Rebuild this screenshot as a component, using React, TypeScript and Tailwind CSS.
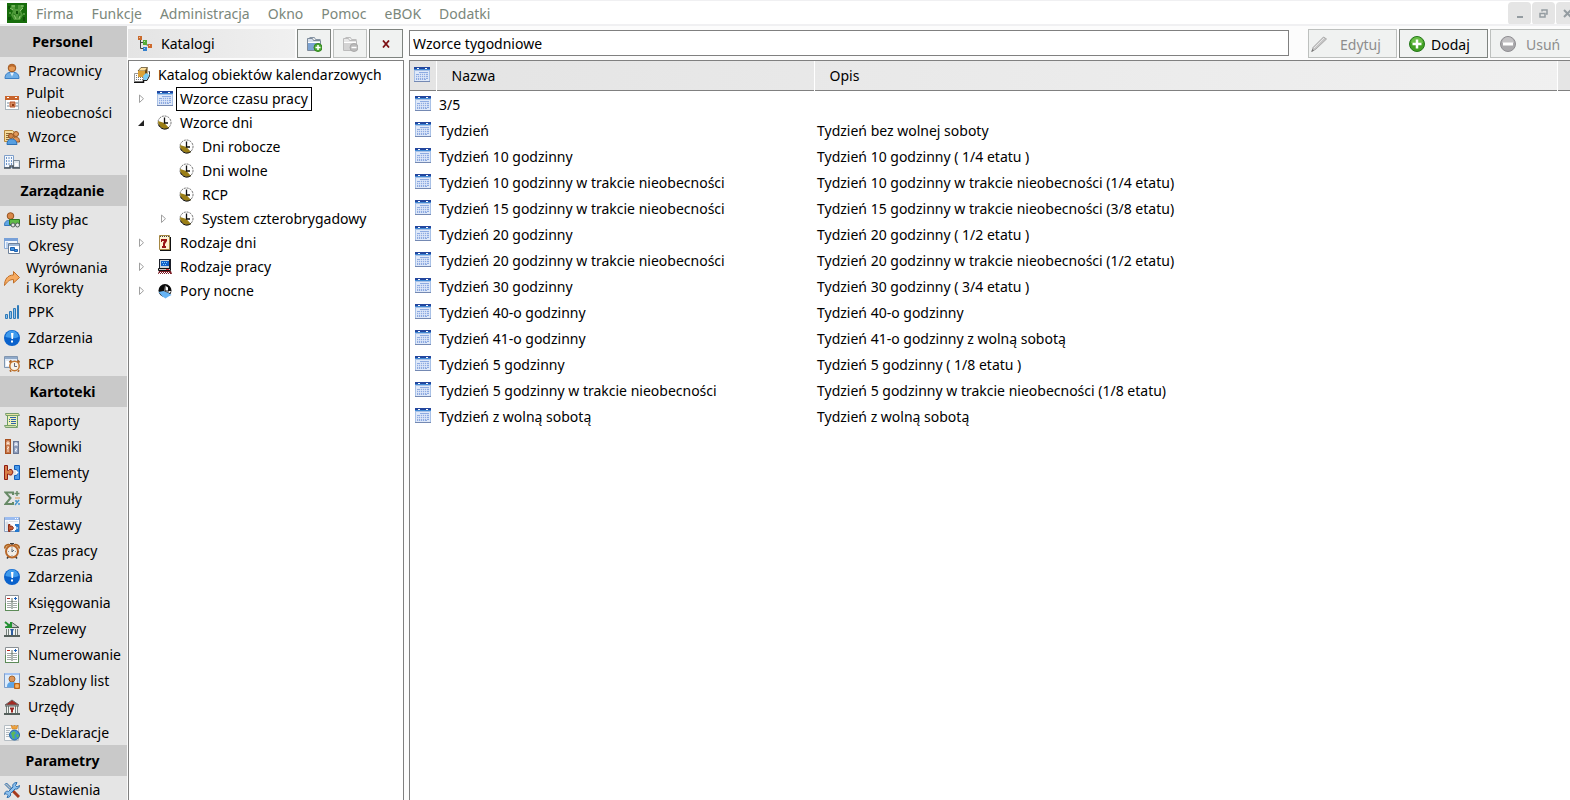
import { useState } from "react";
import type { ReactNode } from "react";

const NAV_ROW = "flex shrink-0 items-center pl-1 text-[14px] leading-[20px] hover:bg-[#d8e6f2]";
const TOOL_BUTTON = "flex h-[29px] shrink-0 items-center border bg-[#f0f2f1]";
const WINDOW_BUTTON =
  "flex h-[23px] w-[23px] items-center justify-center rounded-sm bg-[#e5e5e5] text-[#949ca1]";

type IconName = keyof typeof ICONS;

// All drawings share a 16x16 grid.
const ICONS = {
  user: (
    <>
      <path d="M1 15.500c0-4 2-6 5-6h4c3 0 5 2 5 6z" fill="#6faee6" stroke="#3c7fc4" />
      <path d="M6 9.500l2 4 2-4z" fill="#e8f3ff" />
      <circle cx="8" cy="5" r="3.800" fill="#e59a55" stroke="#9a5420" />
      <path d="M4.500 5c0-5 7-5 7 0-2-2-5-2-7 0z" fill="#b9692c" />
    </>
  ),
  absence: (
    <>
      <rect x="1.500" y="1.500" width="13" height="13" fill="#fff" stroke="#a8b4bc" />
      <path d="M1 1h14v4H1z" fill="#c8642c" />
      <path d="M3 2h2v1H3zM11 2h2v1h-2z" fill="#fff" />
      <path d="M3 7h2v2H3zM3 10h2v2H3zM12 7h2v2h-2zM12 10h2v2h-2z" fill="#b9c4cb" />
      <path d="M6 7h5v5H6z" fill="#d98d62" stroke="#b4552a" />
      <path d="M8 9h2v2H8z" fill="#8f3b12" />
    </>
  ),
  patterns: (
    <>
      <path d="M.500 1.500h8l2 2v9H.500z" fill="#f6dc9c" stroke="#b8893c" />
      <path d="M2 4.500h6M2 6.500h4M2 8.500h3M2 10.500h3" stroke="#8d6a35" />
      <circle cx="7" cy="7" r="2.500" fill="#d18545" stroke="#96531f" />
      <circle cx="12" cy="5" r="2.500" fill="#e49b5c" stroke="#96531f" />
      <path d="M9 13c0-4 1-5 3-5s3.500 1 3.500 5z" fill="#e0955a" stroke="#96531f" />
      <path d="M3 15.500c0-4 2-5.500 4.500-5.500s5 1 5.500 5.500z" fill="#579fe0" stroke="#2f70b4" />
    </>
  ),
  company: (
    <>
      <path d="M.500.500h9v12h-9z" fill="#f4f8fd" stroke="#7f9fc9" />
      <path
        d="M2 2h1v2H2zM4.500 2h1v2h-1zM7 2h1v2H7zM2 5h1v2H2zM4.500 5h1v2h-1zM7 5h1v2H7zM2 8h1v2H2zM4.500 8h1v2h-1zM7 8h1v2H7z"
        fill="#6f95c8"
      />
      <path d="M9.500 5.500h6v7h-6z" fill="#dfe7ef" stroke="#7b8995" />
      <path d="M11 8h3v3h-3z" fill="#fff" />
      <path d="M0 13h6v-2h3v2h7" fill="none" stroke="#49545e" strokeWidth="1.500" />
    </>
  ),
  payroll: (
    <>
      <circle cx="6.500" cy="4" r="3.300" fill="#d9894a" stroke="#96531f" />
      <path d="M.500 13.500c0-4 2-5 4-5h3c2 0 3 1 4 3v2z" fill="#5fa6e4" stroke="#3877ba" />
      <path d="M5.500 7.500h10v5h-10z" fill="#5fbb46" stroke="#2c7a23" />
      <circle cx="9" cy="13" r="2" fill="#e6e6e6" stroke="#55605c" />
      <circle cx="13.500" cy="13" r="2" fill="#e6e6e6" stroke="#55605c" />
    </>
  ),
  periods: (
    <>
      <path d="M.500.500h13v10H.500z" fill="#f2f7fd" stroke="#8aabd6" />
      <path d="M0 0h14v3H0z" fill="#77a0d8" />
      <path d="M2 4h2v6H2z" fill="#b9d0ee" />
      <path d="M4.500 5.500h11v10h-11z" fill="#fff" stroke="#6d8099" />
      <path d="M5 6h10v2H5z" fill="#9db8d8" />
      <path d="M6.500 9.500h4v3h-4zM10.500 11.500h3v2h-3z" fill="#3e92e4" stroke="#1f62b0" />
    </>
  ),
  adjust: (
    <path
      d="M.500 15.500c0-6 3-10.500 9-10.500V1.500l6 6-6 5.500V9.500c-4 0-6 2-9 6z"
      fill="#f6ab62"
      stroke="#c06f28"
    />
  ),
  bars: (
    <g fill="#8cc2ee" stroke="#2f7ab8">
      <path d="M1.500 10.500h2v4h-2zM5.500 7.500h2v7h-2zM9.500 4.500h2v10h-2zM13.500 1.500h1v13h-1z" />
    </g>
  ),
  event: (
    <>
      <circle cx="8" cy="8" r="8" fill="#0a62cc" />
      <path d="M1.500 7a6.500 6.500 0 0 1 13 0c-4 2-8 1-13 0z" fill="#3f9aec" />
      <path d="M7 3h2.500L9 9H7.500z" fill="#fff" />
      <path d="M7 10.500h2v2H7z" fill="#fff" />
    </>
  ),
  rcp: (
    <>
      <path d="M.500.500h13v11H.500z" fill="#dfe9f5" stroke="#8096b0" />
      <path d="M1 1h12v2H1z" fill="#8fa9c9" />
      <path d="M2 5h3v5H2z" fill="#fff" />
      <path d="M5.500 6.500l2-2M15.500 6.500l-2-2M6 15.500l1-1M15 15.500l-1-1" stroke="#a85f20" strokeWidth="2" />
      <circle cx="10.500" cy="10" r="4.700" fill="#f7f3ea" stroke="#c3762f" strokeWidth="1.500" />
      <path d="M10.500 7v3.500H13" fill="none" stroke="#667" />
    </>
  ),
  report: (
    <>
      <path d="M3.500 1.500h10v12h-10z" fill="#eef2bb" stroke="#6a9c5f" />
      <path d="M1.500.500h13l1 2H2z" fill="#e7e3a4" stroke="#779f6c" />
      <path d="M.500 12.500h11l2 2H1.500z" fill="#cbdcaa" stroke="#779f6c" />
      <path d="M6 4.500h6M7 6.500h5M7 8.500h5M7 10.500h5" stroke="#2f62a8" />
      <path d="M5 6.500h1M5 8.500h1" stroke="#2f62a8" />
    </>
  ),
  dictionary: (
    <>
      <path d="M1 0h6v15H1z" fill="#a9501f" />
      <path d="M2 1h4v13H2z" fill="#c4754a" />
      <path d="M3 6V3h2v3M3 4.500h2M3 8h2L3 10h2M3 12h2" fill="none" stroke="#ffe5cf" />
      <path d="M9 2h6v13H9z" fill="#6a7794" />
      <path d="M10 3h4v11h-4z" fill="#8b9ab8" />
      <path d="M11 7V4h2v3M11 5.500h2M11 10h2l-2 2h2" fill="none" stroke="#eef3ff" />
    </>
  ),
  elements: (
    <>
      <path d="M.500.500h3v5h1l1-1h2l1.500 2.500L7.500 10h-2l-1-1h-1v5.500h-3z" fill="#d97f48" stroke="#8f1c14" />
      <path d="M10.500.500h5v14h-5v-4h2l1-3-1-3h-2z" fill="#4b9aea" stroke="#0f5bb8" />
      <path d="M12 5l2.500 2.500L12 10z" fill="#fff" />
    </>
  ),
  formula: (
    <>
      <path d="M9 4V1.500H1.500l5 5.500-5 6H9V11" fill="none" stroke="#678a66" strokeWidth="2" />
      <path d="M13 0v5M10.500 2.500h5" stroke="#678a66" strokeWidth="1.500" />
      <path d="M11 14l4-5M11 10h2M14 13h2" stroke="#4a97cf" strokeWidth="1.500" />
      <path d="M11 7h5" stroke="#df9b59" />
    </>
  ),
  sets: (
    <>
      <path d="M.500.500h15v14H.500z" fill="#f7f9fc" stroke="#8a9ebc" />
      <path d="M1 0h14v3H1z" fill="#9bbcf0" />
      <path d="M11 1h1v1h-1zM13 1h1v1h-1z" fill="#fff" />
      <path d="M2 5h2v8H2zM5 4.500h9" fill="#dadfe6" stroke="#dadfe6" />
      <path d="M4.500 7.500h1.500v2l2-.500 1.500 2-1.500 2-2-.500v2H4.500z" fill="#c55c34" stroke="#8f2f1a" />
      <path d="M11 7h4v8h-4v-2h1V9h-1z" fill="#2479cf" />
      <path d="M12.500 9.500l1.500 1.500-1.500 1.500z" fill="#fff" />
    </>
  ),
  clock: (
    <>
      <path d="M1 5.500c-1-3 3-5 5-3.500M15 5.500c1-3-3-5-5-3.500" fill="#e9b46c" stroke="#a85f20" strokeWidth="1.500" />
      <path d="M6 .500h4M8 0v2M3 15.500l1.500-2M13 15.500l-1.500-2" stroke="#3c3c3c" strokeWidth="1.500" />
      <circle cx="8" cy="8.500" r="6" fill="#f3eee6" stroke="#b9692c" strokeWidth="2" />
      <path d="M8 5.500v3.500M8 9l2-2" stroke="#5a6672" />
      <path d="M8 4v1M8 13v-1M4 8.500h1M12 8.500h-1" stroke="#8c98a4" />
    </>
  ),
  ledger: (
    <>
      <path d="M1.500.500h13v15h-13z" fill="#fff" stroke="#8a9094" />
      <path d="M1 15.500h14M1.500 8v8M14.500 8v8" stroke="#5d8b58" />
      <path d="M3 3.500h3" stroke="#b7211a" />
      <path d="M11.500 2v3M10 3.500h3" stroke="#1d62ba" />
      <path d="M3 6.500h10M3 8.500h4M9 8.500h4M3 10.500h4M9 10.500h4M3 12.500h4M9 12.500h4" stroke="#a3aaa7" />
      <path d="M8 3v11" stroke="#5d6c60" />
    </>
  ),
  transfer: (
    <>
      <path d="M0 14h16v2H0z" fill="#55605c" />
      <path d="M2 8h12v6H2z" fill="#eef1ef" />
      <path d="M2.500 8v6M4.500 8v6M11.500 8v6M13.500 8v6" stroke="#747f7a" />
      <path d="M1 6.500l7-5 7 5z" fill="#c5cbc8" stroke="#505b56" />
      <path d="M6 8h4l-1 2v4H7v-4z" fill="#2f5d9e" />
      <path d="M1 1l5 4M7 1v5H1.500" fill="none" stroke="#229332" strokeWidth="2" />
    </>
  ),
  template: (
    <>
      <path d="M.500.500h15v14H.500z" fill="#dcebfb" stroke="#7d9dc8" />
      <path d="M1 0h14v2H1z" fill="#a2c3f3" />
      <circle cx="8" cy="6" r="3" fill="#dc965b" stroke="#a5662f" />
      <path d="M3 14c0-4 2-5 5-5s5 1 5 5z" fill="#5ca4e6" />
      <path d="M10.500 10.500h5v5h-5z" fill="#e38c32" stroke="#b9651a" />
      <path d="M11 13h4M13 11v4" stroke="#f9c180" />
    </>
  ),
  office: (
    <>
      <path d="M0 14h16v2H0z" fill="#55605c" />
      <path d="M2 7h12v7H2z" fill="#f1f3f2" />
      <path d="M2.500 7v7M4.500 7v7M11.500 7v7M13.500 7v7" stroke="#727d78" />
      <path d="M1 6l7-5 7 5z" fill="#a22a22" stroke="#6b6b6b" />
      <path d="M1 7h14" stroke="#5b6661" />
      <path d="M6 8.500h4v2H9v3H7v-3H6z" fill="#9b2620" />
    </>
  ),
  declaration: (
    <>
      <path d="M.500.500h14v15H.500z" fill="#fafafa" stroke="#b6bec4" />
      <path d="M2 3.500h5M2 5.500h4M2 7.500h3M2 9.500h3M2 11.500h3" stroke="#b2bac0" />
      <circle cx="10.500" cy="10" r="5" fill="#3d8fd4" stroke="#2767a2" />
      <path d="M7 8l3-2 2 2-2 2 1 3-2 1-1-3zM13 9l2 1-1 3-2-2z" fill="#5cb85a" />
      <path d="M7 0l2 1.500L10.500 0 12 1.500 14 0l-1 4H8z" fill="#f0a23a" stroke="#c47416" strokeWidth=".5" />
    </>
  ),
  settings: (
    <>
      <path d="M1 2.500l1.500-1.500 5 5L6 7.500z" fill="#b6bec4" stroke="#2e6fae" />
      <path d="M9 9l2 2 4 4" fill="none" stroke="#a53a1e" strokeWidth="3" />
      <path
        d="M15.500 3.500l-2.500 1.500-1.500-1.500L13 .500c-3 0-5 2-4 4.500L4.500 9.500c-2-1-4 .500-4 3L2 11.500l2 2L3 15.500c3 0 4-2 3.500-4L11 7c2.500.500 4.500-1 4.500-3.500z"
        fill="#8cc0ee"
        stroke="#2e6fae"
      />
    </>
  ),
  tree: (
    <>
      <path d="M3.500 3v9.500H6M3.500 6.500H6M9 8.500l3 1" fill="none" stroke="#3c443f" />
      <path d="M1 0h4v4H1z" fill="#c96a2c" />
      <path d="M6 4h4v5H6z" fill="#54ad37" />
      <path d="M11 8h4v4h-4z" fill="#ce6a2c" />
      <path d="M6 11h4v4H6z" fill="#3380cd" />
      <path d="M2 1h1v1H2zM7 5h1v1H7zM7 12h1v1H7zM12 9h1v1h-1z" fill="#fff" opacity=".6" />
    </>
  ),
  folderAdd: (
    <>
      <path d="M1.500 14.500v-12h5l1 2h7v10z" fill="#d7e0eb" stroke="#7d8b9b" />
      <path d="M3.500 1.500h5l1 2h5" fill="none" stroke="#8795a4" />
      <path d="M2 7h12v7H2z" fill="#7ca4d3" />
      <path d="M2 6.500h12" stroke="#fff" />
      <circle cx="12" cy="11.500" r="4" fill="#4bab32" stroke="#32841f" />
      <path d="M12 9v5M9.500 11.500h5" stroke="#fff" strokeWidth="1.500" />
    </>
  ),
  folderRemove: (
    <>
      <path d="M1.500 14.500v-12h5l1 2h7v10z" fill="#e8e8e8" stroke="#bcbcbc" />
      <path d="M3.500 1.500h5l1 2h5" fill="none" stroke="#bdbdbd" />
      <path d="M2 7h12v7H2z" fill="#d4d4d4" />
      <path d="M2 6.500h12" stroke="#fff" />
      <circle cx="12" cy="11.500" r="4" fill="#bbb" stroke="#a9a9a9" />
      <path d="M9.500 11.500h5" stroke="#fff" strokeWidth="1.500" />
    </>
  ),
  catalog: (
    <>
      <path d="M.500 6.500h9v8h-9z" fill="#fff" stroke="#999" />
      <path d="M2 8.500h7M2 10.500h7M2 12.500h7" stroke="#777" strokeDasharray="1 1" />
      <path d="M0 15.500h9.500V13" fill="none" stroke="#111" strokeWidth="1.500" />
      <path d="M4 4l3-3.500h6.500L11 4z" fill="#ffe09a" stroke="#4d3d1c" strokeWidth=".7" />
      <path d="M4 4h7v6H4z" fill="#dca136" />
      <path d="M11 4l2.500-3.500V7L11 10z" fill="#6d4a10" />
      <path d="M9 9l3-3 3.500 2-3 5H10z" fill="#79cdf6" />
      <path d="M10 13.500h3l3-5.500-1-4" fill="none" stroke="#1c1c1c" />
    </>
  ),
  calendar: (
    <>
      <path d="M0 1h16v13H0z" fill="#a9c1e6" />
      <path d="M1 4h14v10H1z" fill="#dfe9f9" />
      <path d="M0 0h16v2H0z" fill="#23479e" />
      <path d="M0 2h16v1H0z" fill="#3f88d4" />
      <path d="M3 1h2v1H3zM11 1h2v1h-2z" fill="#fff" />
      <path d="M0 14h16v1H0z" fill="#7489b3" />
      <path d="M5 5h9v7h-2v1H2V7h3z" fill="#8eabe2" />
      <path
        d="M5 6.500h9M2 8.500h12M2 10.500h12M3.500 8v5M5.500 6v7M7.500 6v7M9.500 6v7M11.500 6v6"
        stroke="#dfe9f9"
        strokeWidth=".8"
      />
    </>
  ),
  dayPattern: (
    <>
      <circle cx="7.500" cy="7.500" r="6.500" fill="#fff" stroke="#666" strokeDasharray="2 1" />
      <path d="M1 6l6.500 2 4.500 5C8 15.500 1 13 1 6z" fill="#9a7e16" />
      <path d="M1.500 9.500c2 4.500 7 6 10.500 3" fill="none" stroke="#111" />
      <path d="M7.500 2.500v5.500H11" fill="none" stroke="#111" strokeWidth="1.300" />
    </>
  ),
  dayKind: (
    <>
      <path d="M3 2h11v14H3z" fill="#111" />
      <path d="M2.500.500h10v14h-10z" fill="#fff4d4" stroke="#a58744" />
      <path d="M3 1.500h9" stroke="#444" strokeDasharray="1 1" />
      <path d="M4 4h6v2L8 9v2h1v2H5v-2h1V8l1-2H5v1H4z" fill="#981616" />
    </>
  ),
  workKind: (
    <>
      <path d="M2 0h12v10H2z" fill="#1d2029" />
      <path d="M3 1h9v8H3z" fill="#ccd5d9" />
      <path d="M4 2h8v5H4z" fill="#1262cb" />
      <path d="M5 3.500h6M6 5.500h4" stroke="#87d0ff" strokeDasharray="1 1" />
      <path d="M1.500 9.500h12v2h-12z" fill="#c8c8c8" stroke="#111" />
      <path d="M9 10h3v1H9z" fill="#d72d2d" />
      <path d="M2 12h12l1 3H1z" fill="#7d1f28" />
      <path d="M3 13.500h10M2 14.500h12" stroke="#fff" strokeDasharray="1 1" />
    </>
  ),
  night: (
    <>
      <circle cx="8" cy="7.500" r="6.500" fill="#0b0b0b" />
      <path d="M1.500 9l5-1 5 2 3 2-3 1.500-3 2-3-2z" fill="#67b4f5" />
      <path d="M8 2.500l3 2V8h3l-1 2-3-1-3-1z" fill="#fff" />
      <path d="M8 3v5h4" fill="none" stroke="#0b0b0b" />
    </>
  ),
  pencil: (
    <>
      <path d="M1 15.500l1-4L12.500 1l3 2L5 13z" fill="#c6c6c6" stroke="#a9a9a9" />
      <path d="M3 12L13 2" stroke="#e7e7e7" />
      <path d="M0 16l1.500-3 1.500 1.500z" fill="#777" />
    </>
  ),
  add: (
    <>
      <circle cx="8" cy="8" r="7.500" fill="#43a124" stroke="#24771b" />
      <path d="M2 7a6 6 0 0 1 12 0z" fill="#69bd47" />
      <path d="M8 3.500v9M3.500 8h9" stroke="#fff" strokeWidth="2.500" />
    </>
  ),
  remove: (
    <>
      <circle cx="8" cy="8" r="7.500" fill="#aaa9ac" stroke="#8f8e92" />
      <path d="M2 7a6 6 0 0 1 12 0z" fill="#c3c2c4" />
      <path d="M3 8h10" stroke="#fff" strokeWidth="3" />
    </>
  ),
};

function Icon({ name }: { name: IconName }) {
  return (
    <svg viewBox="0 0 16 16" className="block h-4 w-4 shrink-0" aria-hidden="true">
      {ICONS[name]}
    </svg>
  );
}

const MENU = ["Firma", "Funkcje", "Administracja", "Okno", "Pomoc", "eBOK", "Dodatki"];

interface NavItem {
  label: string;
  icon: IconName;
  lines?: [string, string];
}

const NAV: { title: string; items: NavItem[] }[] = [
  {
    title: "Personel",
    items: [
      { label: "Pracownicy", icon: "user" },
      { label: "Pulpit nieobecności", icon: "absence", lines: ["Pulpit", "nieobecności"] },
      { label: "Wzorce", icon: "patterns" },
      { label: "Firma", icon: "company" },
    ],
  },
  {
    title: "Zarządzanie",
    items: [
      { label: "Listy płac", icon: "payroll" },
      { label: "Okresy", icon: "periods" },
      { label: "Wyrównania i Korekty", icon: "adjust", lines: ["Wyrównania", "i Korekty"] },
      { label: "PPK", icon: "bars" },
      { label: "Zdarzenia", icon: "event" },
      { label: "RCP", icon: "rcp" },
    ],
  },
  {
    title: "Kartoteki",
    items: [
      { label: "Raporty", icon: "report" },
      { label: "Słowniki", icon: "dictionary" },
      { label: "Elementy", icon: "elements" },
      { label: "Formuły", icon: "formula" },
      { label: "Zestawy", icon: "sets" },
      { label: "Czas pracy", icon: "clock" },
      { label: "Zdarzenia", icon: "event" },
      { label: "Księgowania", icon: "ledger" },
      { label: "Przelewy", icon: "transfer" },
      { label: "Numerowanie", icon: "ledger" },
      { label: "Szablony list", icon: "template" },
      { label: "Urzędy", icon: "office" },
      { label: "e-Deklaracje", icon: "declaration" },
    ],
  },
  { title: "Parametry", items: [{ label: "Ustawienia", icon: "settings" }] },
];

interface TreeNode {
  label: string;
  icon: IconName;
  level: 1 | 2;
  arrow?: "closed" | "open";
}

const TREE: TreeNode[] = [
  { label: "Wzorce czasu pracy", icon: "calendar", level: 1, arrow: "closed" },
  { label: "Wzorce dni", icon: "dayPattern", level: 1, arrow: "open" },
  { label: "Dni robocze", icon: "dayPattern", level: 2 },
  { label: "Dni wolne", icon: "dayPattern", level: 2 },
  { label: "RCP", icon: "dayPattern", level: 2 },
  { label: "System czterobrygadowy", icon: "dayPattern", level: 2, arrow: "closed" },
  { label: "Rodzaje dni", icon: "dayKind", level: 1, arrow: "closed" },
  { label: "Rodzaje pracy", icon: "workKind", level: 1, arrow: "closed" },
  { label: "Pory nocne", icon: "night", level: 1, arrow: "closed" },
];

const ROWS: [string, string][] = [
  ["3/5", ""],
  ["Tydzień", "Tydzień bez wolnej soboty"],
  ["Tydzień 10 godzinny", "Tydzień 10 godzinny ( 1/4 etatu )"],
  ["Tydzień 10 godzinny w trakcie nieobecności", "Tydzień 10 godzinny w trakcie nieobecności (1/4 etatu)"],
  ["Tydzień 15 godzinny w trakcie nieobecności", "Tydzień 15 godzinny w trakcie nieobecności (3/8 etatu)"],
  ["Tydzień 20 godzinny", "Tydzień 20 godzinny ( 1/2 etatu )"],
  ["Tydzień 20 godzinny w trakcie nieobecności", "Tydzień 20 godzinny w trakcie nieobecności (1/2 etatu)"],
  ["Tydzień 30 godzinny", "Tydzień 30 godzinny ( 3/4 etatu )"],
  ["Tydzień 40-o godzinny", "Tydzień 40-o godzinny"],
  ["Tydzień 41-o godzinny", "Tydzień 41-o godzinny z wolną sobotą"],
  ["Tydzień 5 godzinny", "Tydzień 5 godzinny ( 1/8 etatu )"],
  ["Tydzień 5 godzinny w trakcie nieobecności", "Tydzień 5 godzinny w trakcie nieobecności (1/8 etatu)"],
  ["Tydzień z wolną sobotą", "Tydzień z wolną sobotą"],
];

function MenuBar() {
  return (
    <header className="flex h-[26px] shrink-0 items-center overflow-hidden border-t border-b-2 border-[#f0f0f2] bg-white pt-px pl-[7px]">
      <svg viewBox="0 0 20 20" className="h-5 w-5 shrink-0" aria-hidden="true">
        <path d="M0 0h20v20H0z" fill="#176d0c" />
        <path d="M4 2h12v3l-2 3 2 4-3 5H7l-3-5 2-4-2-3z" fill="#4f9a3a" />
        <path d="M8 2h3v4H8zM6 10l3 2-2 3zM12 9l2 2-3 4z" fill="#2a7d1c" />
        <path d="M3 5l3 2M16 5l-3 3M7 12l2 4M13 13l-1 3M5 3h3M14 3h3M2 10h2M16 11h2" stroke="#8fc974" />
        <path d="M1 3h2v3H1zM9 8h2v3H9zM16 14h2v4h-2zM1 14h3v3H1z" fill="#0d5207" />
      </svg>
      <nav className="ml-[9px] flex flex-1 gap-[18px] pt-px text-[14px] leading-[20px] text-[#7b877b]">
        {MENU.map((item) => (
          <button key={item} type="button" className="hover:text-black">
            {item}
          </button>
        ))}
      </nav>
      <div className="-mr-[9px] flex shrink-0 gap-px">
        <button type="button" aria-label="Minimalizuj" className={WINDOW_BUTTON}>
          <svg viewBox="0 0 9 9" className="h-[9px] w-[9px]">
            <path d="M2 7h6v2H2z" fill="currentColor" />
          </svg>
        </button>
        <button type="button" aria-label="Przywróć" className={WINDOW_BUTTON}>
          <svg viewBox="0 0 9 9" className="h-[9px] w-[9px]">
            <path d="M3 2.500V1h5v4H7M1 4.500h5V8H1z" fill="none" stroke="currentColor" strokeWidth="1.500" />
          </svg>
        </button>
        <button type="button" aria-label="Zamknij" className={WINDOW_BUTTON}>
          <svg viewBox="0 0 9 9" className="h-[9px] w-[9px]">
            <path d="M1 1l7 7M8 1L1 8" stroke="currentColor" strokeWidth="2" />
          </svg>
        </button>
      </div>
    </header>
  );
}

function Sidebar() {
  return (
    <nav className="flex w-[127px] shrink-0 flex-col overflow-hidden bg-[#e5e5e5]">
      {NAV.map((section) => (
        <section key={section.title} className="flex shrink-0 flex-col">
          <h2 className="flex h-[31px] items-center justify-center bg-[#c9c9c9] pr-0.5 text-[14px] font-bold">
            {section.title}
          </h2>
          {section.items.map((item) =>
            item.lines ? (
              <a key={item.label} href="#" className={`${NAV_ROW} h-10 gap-1.5`}>
                <Icon name={item.icon} />
                <span>
                  {item.lines[0]}
                  <br />
                  {item.lines[1]}
                </span>
              </a>
            ) : (
              <a key={item.label} href="#" className={`${NAV_ROW} h-[26px] gap-2 pt-0.5`}>
                <Icon name={item.icon} />
                <span className="whitespace-nowrap">{item.label}</span>
              </a>
            )
          )}
        </section>
      ))}
    </nav>
  );
}

function Arrow({ state }: { state?: "closed" | "open" }) {
  if (!state) return <span className="w-4 shrink-0" />;
  return (
    <button
      type="button"
      aria-label={state === "open" ? "Zwiń" : "Rozwiń"}
      className="flex w-4 shrink-0 justify-center"
    >
      <svg viewBox="0 0 8 10" className="h-[10px] w-2">
        {state === "open" ? (
          <path d="M7 2v6H1z" fill="#222" />
        ) : (
          <path d="M2.500 1v7.500L6.500 4.700z" fill="#fff" stroke="#a0a0a0" />
        )}
      </svg>
    </button>
  );
}

function CatalogPanel() {
  const [selected, setSelected] = useState("Wzorce czasu pracy");

  return (
    <section className="ml-px flex w-[276px] shrink-0 flex-col pt-[3px]">
      <div className="flex h-[31px] gap-0.5 pr-px">
        <div className="flex h-[29px] flex-1 items-center gap-2 bg-linear-to-r from-[#e4e4e4] to-[#f0f0f0] pl-[9px] text-[14px]">
          <Icon name="tree" />
          <h1>Katalogi</h1>
        </div>
        <button
          type="button"
          aria-label="Dodaj katalog"
          className={`${TOOL_BUTTON} w-[34px] justify-center border-[#7e837f]`}
        >
          <Icon name="folderAdd" />
        </button>
        <button
          type="button"
          disabled
          aria-label="Usuń katalog"
          className={`${TOOL_BUTTON} w-[34px] justify-center border-[#bdc0be]`}
        >
          <Icon name="folderRemove" />
        </button>
        <button
          type="button"
          aria-label="Zamknij panel"
          className={`${TOOL_BUTTON} w-[34px] justify-center border-[#7e837f]`}
        >
          <svg viewBox="0 0 8 8" className="h-2 w-2">
            <path d="M1 .500l6 7M7 .500l-6 7" stroke="#7d1215" strokeWidth="1.800" />
          </svg>
        </button>
      </div>
      <div className="flex-1 border border-b-0 border-[#808080] bg-white pt-0.5 text-[14px] leading-[22px]">
        <div className="flex h-6 items-center gap-2 pl-[5px]">
          <Icon name="catalog" />
          <span>Katalog obiektów kalendarzowych</span>
        </div>
        <ul>
          {TREE.map((node) => (
            <li
              key={node.label}
              className={`flex h-6 items-center ${node.level === 1 ? "pl-1" : "pl-[26px]"}`}
            >
              <Arrow state={node.arrow} />
              <span className="ml-2">
                <Icon name={node.icon} />
              </span>
              <button
                type="button"
                onClick={() => setSelected(node.label)}
                className={`ml-[3px] border px-[3px] ${
                  node.label === selected ? "border-black" : "border-transparent"
                }`}
              >
                {node.label}
              </button>
            </li>
          ))}
        </ul>
      </div>
    </section>
  );
}

function ToolButton({ icon, disabled, children }: { icon: IconName; disabled?: boolean; children: ReactNode }) {
  return (
    <button
      type="button"
      disabled={disabled}
      className={`${TOOL_BUTTON} w-[89px] pt-px text-[14px] ${
        disabled ? "border-[#bdc0be] text-[#8d8d8d]" : "border-[#7e837f] text-black"
      }`}
    >
      <span className={icon === "pencil" ? "ml-0.5" : "ml-[9px]"}>
        <Icon name={icon} />
      </span>
      <span className={icon === "pencil" ? "ml-[13px]" : icon === "remove" ? "ml-2.5" : "ml-1.5"}>
        {children}
      </span>
    </button>
  );
}

function PatternsPanel() {
  const [title, setTitle] = useState("Wzorce tygodniowe");

  return (
    <main className="ml-[5px] flex min-w-0 flex-1 flex-col overflow-hidden pt-[3px]">
      <div className="-mr-[9px] flex h-[31px] gap-0.5">
        <input
          aria-label="Nazwa katalogu"
          value={title}
          onChange={(e) => setTitle(e.target.value)}
          className="mt-px mr-[17px] h-[26px] min-w-0 flex-1 border border-[#808080] bg-white px-[3px] text-[14px] focus:outline-none"
        />
        <ToolButton icon="pencil" disabled>
          Edytuj
        </ToolButton>
        <ToolButton icon="add">Dodaj</ToolButton>
        <ToolButton icon="remove" disabled>
          Usuń
        </ToolButton>
      </div>
      <div className="flex-1 border-t border-l border-[#808080] bg-white text-[14px] leading-[20px]">
        <table className="w-full table-fixed border-collapse text-left">
          <colgroup>
            <col className="w-[26px]" />
            <col className="w-[378px]" />
            <col />
            <col className="w-[13px]" />
          </colgroup>
          <thead>
            <tr className="h-[29px] border-b border-[#808080] bg-linear-to-r from-[#e4e4e4] to-[#f0f0f0]">
              <th className="border-r border-white pl-1" aria-label="Typ">
                <Icon name="calendar" />
              </th>
              <th className="border-r border-white pt-0.5 pl-[15px] font-normal">Nazwa</th>
              <th className="border-r border-white pt-0.5 pl-[15px] font-normal">Opis</th>
              <th className="bg-[#e5e5e5]" aria-label="Więcej" />
            </tr>
          </thead>
          <tbody>
            {ROWS.map(([name, description]) => (
              <tr key={name} className="h-[26px] hover:bg-[#eef5fc]">
                <td className="pt-0.5 pl-[5px]">
                  <Icon name="calendar" />
                </td>
                <td className="truncate pt-[3px] pl-[3px]">{name}</td>
                <td className="truncate pt-[3px] pl-[3px]" colSpan={2}>
                  {description}
                </td>
              </tr>
            ))}
          </tbody>
        </table>
      </div>
    </main>
  );
}

export default function App() {
  return (
    <div className="flex h-screen flex-col overflow-hidden bg-[#fcfcfc] font-['Noto_Sans','Open_Sans',sans-serif] text-black">
      <MenuBar />
      <div className="flex min-h-0 flex-1">
        <Sidebar />
        <CatalogPanel />
        <PatternsPanel />
      </div>
    </div>
  );
}
